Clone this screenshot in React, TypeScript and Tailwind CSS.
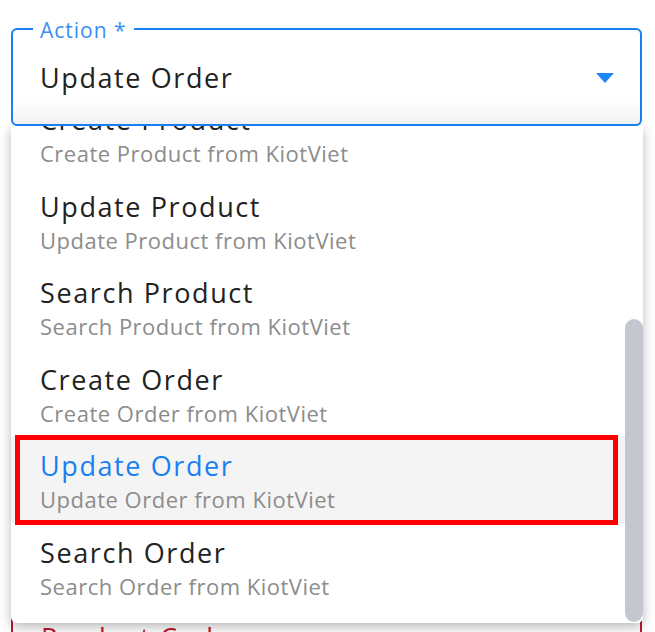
import React from "react";

const actions = [
  { id: "create-product", title: "Create Product", desc: "Create Product from KiotViet" },
  { id: "update-product", title: "Update Product", desc: "Update Product from KiotViet" },
  { id: "search-product", title: "Search Product", desc: "Search Product from KiotViet" },
  { id: "create-order", title: "Create Order", desc: "Create Order from KiotViet" },
  { id: "update-order", title: "Update Order", desc: "Update Order from KiotViet" },
  { id: "search-order", title: "Search Order", desc: "Search Order from KiotViet" },
];

export default function App() {
  const selected = "update-order";

  return (
    <div className="relative h-[632px] w-[655px] overflow-hidden bg-white font-['Open_Sans','Noto_Sans',sans-serif]">
      <div className="pl-[11px] pr-[13px] pt-[28px]">
        {/* Action select */}
        <div className="relative z-10 flex h-[98px] items-center rounded-[6px] border-2 border-[#1a7ff0] bg-[linear-gradient(to_bottom,#ffffff_75%,#f1f1f1)] pl-[27px] pr-[26px] pt-[2px]">
          <span className="absolute -top-[13px] left-[20px] bg-white px-[7px] text-[21px] leading-[26px] tracking-[1px] text-[#3a8ef2]">
            Action *
          </span>
          <span className="flex-1 text-[27px] leading-[34px] tracking-[1.6px] text-[#222]">Update Order</span>
          <svg width="18" height="10" viewBox="0 0 18 10">
            <path d="M0 0h18L9 10z" fill="#1f86f5" />
          </svg>
        </div>

        {/* next field, mostly hidden behind the menu */}
        <div className="mt-[484px] h-[98px] rounded-[6px] border-2 border-[#c0182c] pl-[28px] pt-[9px]">
          <span className="text-[27px] leading-[34px] tracking-[1.6px] text-[#c0182c]">Product Code</span>
        </div>
      </div>

      {/* Dropdown menu */}
      <div className="absolute left-[11px] top-[126px] h-[497px] w-[632px] overflow-hidden rounded-b-[6px] bg-white shadow-[0_4px_12px_rgba(0,0,0,0.28)]">
        <div className="-mt-[36px] pr-[18px]">
          {actions.map((a) => {
            const active = a.id === selected;
            return (
              <div
                key={a.id}
                className={`relative h-[86.5px] pl-[29px] pt-[13px] ${active ? "bg-[#f4f4f4]" : ""}`}
              >
                <div
                  className={`text-[27px] leading-[34px] tracking-[1.6px] ${active ? "text-[#1a7ff0]" : "text-[#222]"}`}
                >
                  {a.title}
                </div>
                <div className="mt-[2px] text-[22px] leading-[28px] tracking-[0.5px] text-[#8c8c8c]">{a.desc}</div>
                {active && (
                  <div className="pointer-events-none absolute bottom-[-2px] left-[4px] right-[7px] top-[-1px] border-[5px] border-[#ff0000]" />
                )}
              </div>
            );
          })}
        </div>
        <div className="absolute bottom-[1px] right-0 top-[193px] w-[18px] rounded-full bg-[#c3c8d0]" />
      </div>
    </div>
  );
}
